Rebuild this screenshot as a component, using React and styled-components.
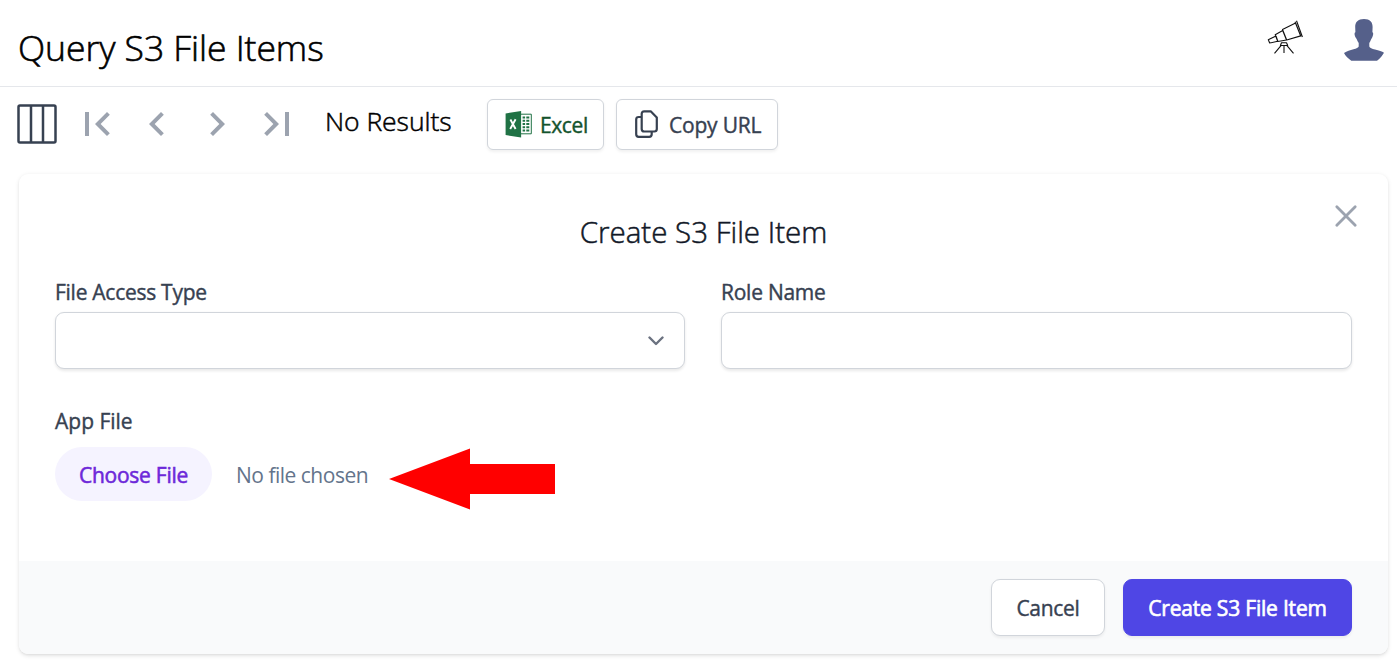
import React from "react";
import styled, { createGlobalStyle } from "styled-components";

const Global = createGlobalStyle`
  * { box-sizing: border-box; }
  body { margin: 0; background: #fff; font-family: "Open Sans", "Noto Sans", sans-serif; color: #000; overflow: hidden; }
  button { font-family: inherit; margin: 0; cursor: pointer; }
`;

const Page = styled.div`
  height: 666px;
  display: flex;
  flex-direction: column;
`;

const Header = styled.header`
  height: 87px;
  border-bottom: 1px solid #e5e7eb;
  display: flex;
  align-items: flex-start;
  justify-content: space-between;
  padding: 0 13px 0 18px;
`;

const Text = styled.span`
  white-space: nowrap;
  font-size: ${(p) => p.$size || 21}px;
  font-weight: ${(p) => p.$weight || 400};
  -webkit-text-stroke: ${(p) => p.$stroke ?? 0.4}px currentColor;
  letter-spacing: ${(p) => p.$track || 0}px;
  line-height: 30px;
  color: ${(p) => p.$color || "#374151"};
`;

const Title = styled.h1`
  margin: 22px 0 0;
  font-size: 35.5px;
  font-weight: 300;
  -webkit-text-stroke: 0.6px currentColor;
  letter-spacing: -0.05px;
  line-height: 50px;
  white-space: nowrap;
`;

const HeaderIcons = styled.div`
  display: flex;
  gap: 39px;
  padding-top: 18px;
`;

const Toolbar = styled.div`
  display: flex;
  align-items: flex-start;
  height: 51px;
  margin-top: 12px;
  padding-left: 17px;
`;

const Pager = styled.div`
  display: flex;
  gap: 12px;
  margin: 1px 24px 0 16px;
`;

const IconButton = styled.button`
  display: flex;
  padding: 0;
  border: 0;
  background: none;
`;

const ColumnsButton = styled(IconButton)`
  margin-top: 5px;
`;

const Results = styled.div`
  width: 162px;
  padding-top: 7px;
`;

const Outlined = styled.button`
  display: flex;
  align-items: center;
  justify-content: ${(p) => (p.$center ? "center" : "flex-start")};
  gap: 8px;
  width: ${(p) => p.$width}px;
  height: ${(p) => p.$height || 51}px;
  padding: ${(p) => (p.$center ? "1px 0 0" : "0 0 0 17px")};
  margin-right: ${(p) => p.$after || 0}px;
  background: #fff;
  border: 1px solid #d1d5db;
  border-radius: ${(p) => (p.$height ? 9 : 6)}px;
  box-shadow: 0 1.5px 3px rgba(0, 0, 0, 0.06);
`;

const Primary = styled(Outlined)`
  background: #4f46e5;
  border-color: #4f46e5;
`;

const Card = styled.section`
  margin: 24px 9px 0 19px;
  height: 480px;
  border-radius: 9px;
  overflow: hidden;
  display: flex;
  flex-direction: column;
  background: #fff;
  box-shadow: 0 1.5px 4.5px rgba(0, 0, 0, 0.1), 0 1.5px 3px -1.5px rgba(0, 0, 0, 0.1);
`;

const CardBody = styled.div`
  flex: 1;
  padding: 26px 36px 0;
`;

const CardHead = styled.div`
  display: grid;
  grid-template-columns: 24px 1fr 36px;
  height: 77px;
  margin-right: -12px;
`;

const CardTitle = styled.h2`
  margin: 11px 0 0;
  text-align: center;
  font-size: 29.5px;
  font-weight: 300;
  -webkit-text-stroke: 0.5px currentColor;
  line-height: 42px;
  color: #111827;
  white-space: nowrap;
`;

const Fields = styled.div`
  display: grid;
  grid-template-columns: 630px 1fr;
  gap: 36px;
`;

const Field = styled.div`
  display: flex;
  flex-direction: column;
  gap: 5px;
`;

const Box = styled.div`
  height: 57px;
  display: flex;
  align-items: center;
  justify-content: flex-end;
  padding-right: 20px;
  background: #fff;
  border: 1px solid #d1d5db;
  border-radius: 9px;
  box-shadow: 0 1.5px 3px rgba(0, 0, 0, 0.09);
`;

const FileField = styled(Field)`
  margin-top: 37px;
  gap: 11px;
`;

const FileRow = styled.div`
  position: relative;
  display: flex;
  align-items: center;
  gap: 24px;
  height: 54px;
`;

const Choose = styled.button`
  width: 157px;
  height: 54px;
  padding: 2px 0 0;
  border: 0;
  border-radius: 27px;
  background: #f5f3ff;
`;

const FileName = styled(Text)`
  padding-top: 2px;
`;

const Arrow = styled.svg`
  position: absolute;
  left: 334px;
  top: 1px;
`;

const Footer = styled.footer`
  height: 93px;
  padding: 18px 36px;
  display: flex;
  justify-content: flex-end;
  background: #f9fafb;
`;

const navPaths = [
  "M18.41 16.59L13.82 12l4.59-4.59L17 6l-6 6 6 6zM6 6h2v12H6z",
  "M15.41 7.41L14 6l-6 6 6 6 1.41-1.41L10.83 12z",
  "M10 6L8.59 7.41 13.17 12l-4.58 4.59L10 18l6-6z",
  "M5.59 7.41L10.18 12l-4.59 4.59L7 18l6-6-6-6zM16 6h2v12h-2z",
];

const Telescope = () => (
  <svg width="38" height="38" viewBox="0 0 38 38" fill="none" stroke="#111" strokeWidth="1.1" strokeLinejoin="round">
    <path d="M1.300 21.700 9 18 10.800 23.300 2.700 25ZM8.200 16.700 15.700 12.500 19.500 22 10.800 23.500ZM15.500 11.500 28.600 5 33.700 17.900 19.700 22ZM28 3.800 33.900 18.500M29.500 2.800 35.400 19" />
    <path d="M13.400 27.500 14.500 24.700H19.500L20.700 27.500ZM14 27.700 7.500 35.300M17 28V35M20 27.700 26.500 35.300" />
  </svg>
);

const Avatar = () => (
  <svg width="40" height="43" viewBox="0 0 40 43" fill="#55608a">
    <path d="M20 1C26 1 28.700 4 28.600 9L28.400 14.300C29.800 14.600 29.200 18 27.900 20 27.200 20.800 26.800 22 26.300 23.300L25.300 25V28.500C25.800 30 28 30.800 31 31.500 35 32.500 38 33.500 40 34.700 38.500 37.500 36 40.500 33 42.700H7.300C4.300 40.700 1.500 38 0 35 3 33.300 6 32.300 9.500 31.300 12.500 30.500 14.300 29.800 14.700 28.500V25L13.600 23.300C13.200 22 12.600 20.800 12 20 10.500 18 10 14.600 11.400 14.300L11.200 9C11.100 4 14 1 20 1Z" />
  </svg>
);

const ExcelIcon = () => (
  <svg width="27" height="27" viewBox="-0.6 0 27 27">
    <path d="M15 3.200H25.700V22.800H15" fill="#fff" stroke="#207245" strokeWidth="1" />
    <path d="M17 6.500h2.500M17 9.800h2.500M17 13h2.500M17 16.300h2.500M17 19.500h2.500M20.700 6.500h3M20.700 9.800h3M20.700 13h3M20.700 16.300h3M20.700 19.500h3" stroke="#207245" strokeWidth="2" />
    <path d="M0 2.500 15.500 0V26.500L0 24Z" fill="#207245" />
    <path d="M4.800 8.500 10 18M10 8.300 4.600 18" stroke="#fff" strokeWidth="1.900" />
  </svg>
);

export default function App() {
  return (
    <Page>
      <Global />
      <Header>
        <Title>Query S3 File Items</Title>
        <HeaderIcons>
          <Telescope />
          <Avatar />
        </HeaderIcons>
      </Header>
      <Toolbar>
        <ColumnsButton aria-label="Columns">
          <svg width="40" height="40" viewBox="0 0 40 40" fill="none" stroke="#374151" strokeWidth="2.5">
            <rect x="1.500" y="1.500" width="37" height="37" rx="1.500" />
            <path d="M14 2V38M26 2V38" />
          </svg>
        </ColumnsButton>
        <Pager>
          {navPaths.map((d) => (
            <IconButton key={d}>
              <svg width="48" height="48" viewBox="0 0 24 24" fill="#9ca3af"><path d={d} /></svg>
            </IconButton>
          ))}
        </Pager>
        <Results><Text $size={26.5} $weight={300} $stroke={0.5} $track={-0.05} $color="#000">No Results</Text></Results>
        <Outlined $width={117} $after={12}>
          <ExcelIcon />
          <Text $color="#14532d" $track={-0.4}>Excel</Text>
        </Outlined>
        <Outlined $width={162}>
          <svg width="27" height="30" viewBox="-0.2 1 27 30" fill="none" stroke="#374151" strokeWidth="2.2" strokeLinejoin="round">
            <path d="M10 2.300H16.500L22.600 8.500V20Q22.600 22.500 20.100 22.500H10Q7.500 22.500 7.500 20V4.800Q7.500 2.300 10 2.300Z" />
            <path d="M7.500 8H4.500Q2 8 2 10.500V25.300Q2 27.800 4.500 27.800H15Q17.500 27.800 17.500 25.300V22.500" />
          </svg>
          <Text $track={-0.2}>Copy URL</Text>
        </Outlined>
      </Toolbar>
      <Card>
        <CardBody>
          <CardHead>
            <span />
            <CardTitle>Create S3 File Item</CardTitle>
            <IconButton aria-label="Close">
              <svg width="36" height="32" viewBox="0 0 36 32" fill="none" stroke="#9ca3af" strokeWidth="2.800" strokeLinecap="round">
                <path d="M8.800 6.700 27.200 25.300M27.200 6.700 8.800 25.300" />
              </svg>
            </IconButton>
          </CardHead>
          <Fields>
            <Field>
              <Text $track={-0.27}>File Access Type</Text>
              <Box>
                <svg width="16" height="10" viewBox="0 0 16 10" fill="none" stroke="#6b7280" strokeWidth="2.400" strokeLinecap="round" strokeLinejoin="round">
                  <path d="M1.500 1.500 8 8 14.500 1.500" />
                </svg>
              </Box>
            </Field>
            <Field>
              <Text $track={-0.25}>Role Name</Text>
              <Box />
            </Field>
          </Fields>
          <FileField>
            <Text>App File</Text>
            <FileRow>
              <Choose><Text $color="#6d28d9" $track={-0.25} $stroke={0.55}>Choose File</Text></Choose>
              <FileName $color="#64748b" $stroke={0} $track={-0.5}>No file chosen</FileName>
              <Arrow width="167" height="63" viewBox="0 0 167 63" fill="#f00">
                <path d="M0 31 81 .5V16H166V46H81V61.500Z" />
              </Arrow>
            </FileRow>
          </FileField>
        </CardBody>
        <Footer>
          <Outlined $center $width={114} $height={57} $after={18}><Text $track={-0.3}>Cancel</Text></Outlined>
          <Primary $center $width={229} $height={57}><Text $color="#fff" $stroke={0.65} $track={-0.2}>Create S3 File Item</Text></Primary>
        </Footer>
      </Card>
    </Page>
  );
}
